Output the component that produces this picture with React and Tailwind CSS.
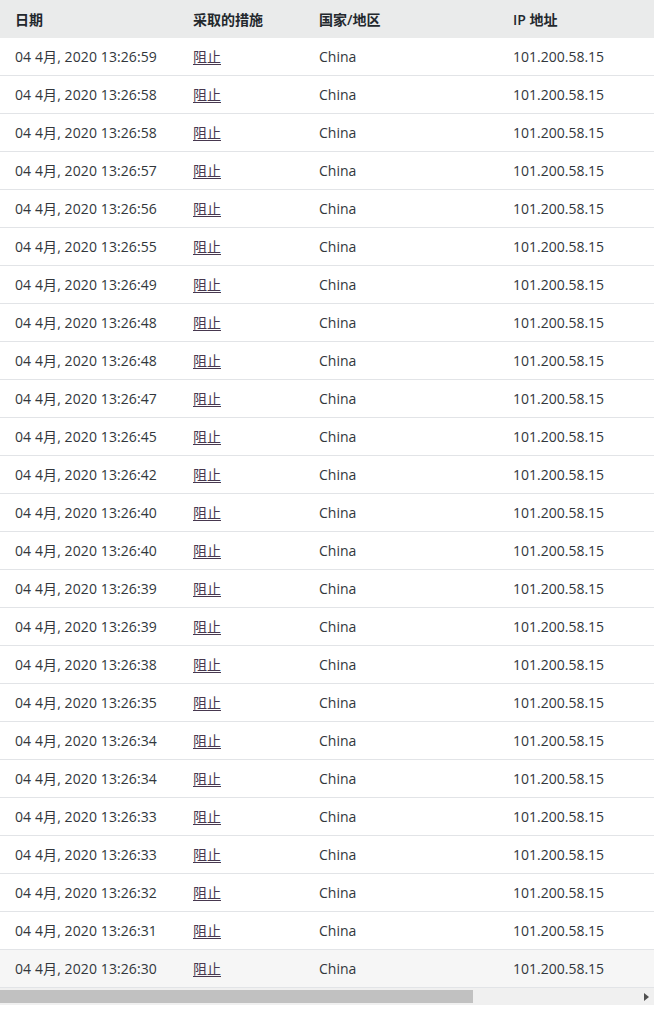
const times = [
  '13:26:59', '13:26:58', '13:26:58', '13:26:57', '13:26:56', '13:26:55', '13:26:49',
  '13:26:48', '13:26:48', '13:26:47', '13:26:45', '13:26:42', '13:26:40', '13:26:40',
  '13:26:39', '13:26:39', '13:26:38', '13:26:35', '13:26:34', '13:26:34', '13:26:33',
  '13:26:33', '13:26:32', '13:26:31', '13:26:30',
]

export default function App() {
  return (
    <div
      className="w-[654px] bg-white text-[14px] text-[#32373c]"
      style={{ fontFamily: '"Open Sans", "Noto Sans CJK SC", sans-serif' }}
    >
      <div className="grid h-[38px] grid-cols-[193px_126px_194px_1fr] items-center bg-[#eaebeb] font-semibold text-[#23282d]">
        <div className="pl-[15px]">日期</div>
        <div>采取的措施</div>
        <div>国家/地区</div>
        <div>IP 地址</div>
      </div>
      {times.map((t, i) => (
        <div
          key={i}
          className={`grid h-[38px] grid-cols-[193px_126px_194px_1fr] items-center border-b border-[#e2e4e7] ${
            i === times.length - 1 ? 'bg-[#f6f6f6]' : ''
          }`}
        >
          <div className="pl-[15px] tracking-[0.1px]">04 4月, 2020 {t}</div>
          <div>
            <a className="text-[#47384f] underline underline-offset-2">阻止</a>
          </div>
          <div>China</div>
          <div>101.200.58.15</div>
        </div>
      ))}
      <div className="flex h-[17px] items-center bg-[#f0f0f0]">
        <div className="h-[13px] w-[473px] bg-[#c1c1c1]" />
        <div className="flex-1" />
        <svg width="5" height="8" viewBox="0 0 5 8" className="mr-[5px]">
          <path d="M0 0 L5 4 L0 8 Z" fill="#505050" />
        </svg>
      </div>
    </div>
  )
}
